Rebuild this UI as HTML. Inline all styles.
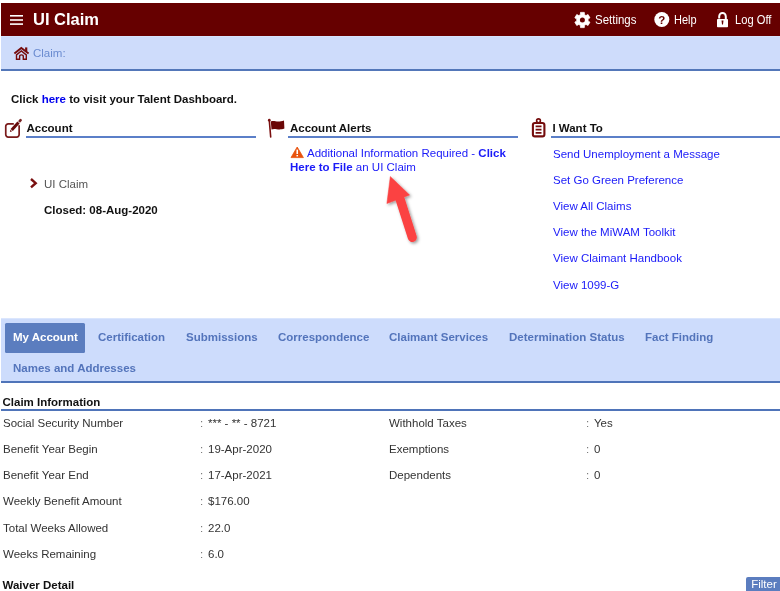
<!DOCTYPE html>
<html><head><meta charset="utf-8">
<style>
html,body{margin:0;padding:0;background:#fff;}
body{width:780px;height:591px;overflow:hidden;position:relative;font-family:"Liberation Sans",sans-serif;font-size:11.5px;color:#333;}
#hdr{position:absolute;left:1px;top:3px;width:779px;height:33px;background:#660000;}
#crumb{position:absolute;left:1px;top:36px;width:779px;height:33px;background:#cedcfb;border-top:1.5px solid #d6e3fc;box-sizing:content-box;}
#crumbline{position:absolute;left:1px;top:69px;width:779px;height:1.7px;background:#5377b9;}
.t{position:absolute;white-space:nowrap;line-height:14px;}
.b{font-weight:bold;}
.lnk{color:#1a1af8;}
.hline{position:absolute;height:2px;background:#5b7fc8;}
#tabs{position:absolute;left:1px;top:318px;width:779px;height:62px;background:#cddcfc;border-top:1px solid #dbe6fd;border-bottom:2px solid #4f74b9;}
.tab{position:absolute;font-weight:bold;color:#5374bb;font-size:11.5px;line-height:14px;white-space:nowrap;}
svg{position:absolute;left:0;top:0;overflow:visible;}
#wrap{position:absolute;left:0;top:0;width:780px;height:591px;will-change:transform;}
</style></head><body><div id="wrap">
<div id="hdr"></div>
<div id="crumb"></div><div id="crumbline"></div>

<!-- header icons -->
<svg width="780" height="591" viewBox="0 0 780 591">
  <!-- hamburger -->
  <g fill="#fff">
    <rect x="10" y="15" width="13" height="1.6"/>
    <rect x="10" y="19.2" width="13" height="1.6"/>
    <rect x="10" y="23.3" width="13" height="1.6"/>
  </g>
  <!-- gear -->
  <g transform="translate(582.4,20)">
    <path fill="#fff" fill-rule="evenodd" stroke="#fff" stroke-width="0.8" stroke-linejoin="round" d="M2.04,-5.32 L1.90,-7.62 L-1.90,-7.62 L-2.04,-5.32 L-3.59,-4.43 L-5.65,-5.45 L-7.55,-2.16 L-5.63,-0.89 L-5.63,0.89 L-7.55,2.16 L-5.65,5.45 L-3.59,4.43 L-2.04,5.32 L-1.90,7.62 L1.90,7.62 L2.04,5.32 L3.59,4.43 L5.65,5.45 L7.55,2.16 L5.63,0.89 L5.63,-0.89 L7.55,-2.16 L5.65,-5.45 L3.59,-4.43Z"/>
    <circle r="2.5" fill="#660000"/>
  </g>
  <!-- help -->
  <circle cx="661.8" cy="19.5" r="7.5" fill="#fff"/>
  <text x="661.8" y="23.8" text-anchor="middle" font-family="Liberation Sans, sans-serif" font-weight="bold" font-size="11.5" fill="#660000">?</text>
  <!-- lock -->
  <g>
    <path d="M719.2,18.5 V16.4 a3.3,3.5 0 0 1 6.6,0 V19.5" fill="none" stroke="#fff" stroke-width="2"/>
    <rect x="717" y="19" width="11" height="8.3" rx="0.8" fill="#fff"/>
    <path d="M721.5,20.6 h2 l-0.5,4 h-1 z" fill="#660000"/>
  </g>
  <!-- home -->
  <g fill="none" stroke="#760c0c" stroke-width="1.7" stroke-linejoin="miter">
    <path d="M14.4,53.6 L21.3,47.9 L28.6,53.6" stroke-width="1.9"/>
    <path d="M26.2,51.4 V47.4" stroke-width="2.2"/>
    <path d="M16.5,54.9 L21.3,51 L26.3,54.9 V59.3 H23.3 V56.6 a1.85,1.7 0 0 0 -3.7,0 V59.3 H16.5 Z" stroke-width="1.4"/>
  </g>
  <!-- edit icon -->
  <g fill="none" stroke="#7a1a1a">
    <path d="M19.15,125.3 V134.6 a2.45,2.45 0 0 1 -2.45,2.45 H8.2 a2.45,2.45 0 0 1 -2.45,-2.45 V126.3 a2.45,2.45 0 0 1 2.45,-2.45 H13.8" stroke-width="1.7"/>
    <path d="M11.7,130.1 L18.5,122.4" stroke-width="3" stroke="#680a0a"/>
    <path d="M19.7,121.1 L20.6,120.1" stroke-width="2.6" stroke="#680a0a" stroke-linecap="round" stroke-opacity="0.9"/>
    <path d="M12.2,131.3 L10.4,129.7 L9.9,132.1 Z" fill="#680a0a" stroke="none"/>
  </g>
  <!-- flag -->
  <g>
    <path d="M269.3,120.4 L270.7,137" stroke="#7a1010" stroke-width="1.6" fill="none" stroke-linecap="round"/><circle cx="269.3" cy="120.2" r="1.35" fill="#7a1010"/>
    <path d="M270.8,121.6 C274,120 277,123 284,120.6 L284.4,128.6 C278,131 275,127.6 271.5,129.6 Z" fill="#6a0606"/>
  </g>
  <!-- clipboard -->
  <g fill="none" stroke="#740c0c" transform="translate(-0.4,0)">
    <rect x="533.3" y="123" width="11.5" height="13.4" rx="2" stroke-width="2.1"/>
    <circle cx="538.9" cy="120.8" r="1.9" stroke-width="1.6"/>
    <path d="M536,126.4 H541.9 M536,129.6 H541.9 M536,132.8 H541.9" stroke-width="1.8"/>
  </g>
  <!-- chevron -->
  <path d="M31,179 L35.7,183.2 L31,187.4" fill="none" stroke="#7a1010" stroke-width="2.4"/>
  <!-- warning triangle -->
  <path d="M297.2,147 L303.4,157.6 H291 Z" fill="#e8520c" stroke="#e8520c" stroke-width="0.8" stroke-linejoin="round"/>
  <rect x="296.45" y="149.6" width="1.6" height="4.4" fill="#fff"/>
  <rect x="296.45" y="155" width="1.6" height="1.4" fill="#fff"/>
  <!-- red arrow -->
  <defs><filter id="sh" x="-30%" y="-30%" width="170%" height="170%"><feDropShadow dx="1.5" dy="1.5" stdDeviation="1.6" flood-color="#000" flood-opacity="0.4"/></filter></defs>
  <g filter="url(#sh)" fill="#fb4343" stroke="#fb4343">
    <path d="M400.2,199.5 L412.3,237.3" stroke-width="9.2" stroke-linecap="round" fill="none"/>
    <path d="M390.3,176.5 L386.9,203.5 L409.6,195 Z" stroke-width="0.5" stroke-linejoin="round"/>
  </g>
</svg>

<!-- header text -->
<div class="t b" style="left:33px;top:9px;font-size:16.5px;line-height:20px;color:#fff;">UI Claim</div>
<div class="t" style="left:595px;top:12.5px;font-size:12px;transform-origin:0 0;transform:scaleX(0.955);color:#fff;">Settings</div>
<div class="t" style="left:674px;top:12.5px;font-size:12px;transform-origin:0 0;transform:scaleX(0.915);color:#fff;">Help</div>
<div class="t" style="left:735px;top:12.5px;font-size:12px;transform-origin:0 0;transform:scaleX(0.93);color:#fff;">Log Off</div>
<div class="t" style="left:33px;top:46px;color:#6a8bd0;">Claim:</div>

<div class="t b" style="left:11px;top:92px;color:#111;">Click <span style="color:#0000ee">here</span> to visit your Talent Dashboard.</div>

<div class="t b" style="left:26.5px;top:121px;color:#111;">Account</div>
<div class="hline" style="left:25.5px;top:136px;width:230px;"></div>
<div class="t b" style="left:290px;top:121px;color:#111;">Account Alerts</div>
<div class="hline" style="left:288px;top:136px;width:230px;"></div>
<div class="t b" style="left:552.4px;top:121px;color:#111;">I Want To</div>
<div class="hline" style="left:551px;top:136px;width:229px;"></div>

<div class="t" style="left:44px;top:177px;color:#555;">UI Claim</div>
<div class="t b" style="left:44px;top:203px;color:#111;">Closed: 08-Aug-2020</div>

<div class="t lnk" style="left:307px;top:146px;">Additional Information Required - <b>Click</b></div>
<div class="t lnk" style="left:290px;top:160px;"><b>Here to File</b> an UI Claim</div>

<div class="t lnk" style="left:553px;top:147px;">Send Unemployment a Message</div>
<div class="t lnk" style="left:553px;top:173px;">Set Go Green Preference</div>
<div class="t lnk" style="left:553px;top:199px;">View All Claims</div>
<div class="t lnk" style="left:553px;top:225px;">View the MiWAM Toolkit</div>
<div class="t lnk" style="left:553px;top:251px;">View Claimant Handbook</div>
<div class="t lnk" style="left:553px;top:278px;">View 1099-G</div>

<div id="tabs"></div>
<div style="position:absolute;left:5px;top:322.6px;width:80.2px;height:30px;background:#5b7dbf;border-radius:1.5px;"></div>
<div class="tab" style="left:13px;top:330px;color:#fff;">My Account</div>
<div class="tab" style="left:98px;top:330px;">Certification</div>
<div class="tab" style="left:186px;top:330px;">Submissions</div>
<div class="tab" style="left:278px;top:330px;">Correspondence</div>
<div class="tab" style="left:389px;top:330px;">Claimant Services</div>
<div class="tab" style="left:509px;top:330px;">Determination Status</div>
<div class="tab" style="left:645px;top:330px;">Fact Finding</div>
<div class="tab" style="left:13px;top:361px;">Names and Addresses</div>

<div class="t b" style="left:2.5px;top:395px;color:#111;">Claim Information</div>
<div class="hline" style="left:1px;top:409.3px;width:779px;height:2px;background:#4f74b9;"></div>

<div class="t" style="left:3px;top:416px;">Social Security Number</div>
<div class="t" style="left:200px;top:416px;color:#777;">:</div><div class="t" style="left:208px;top:416px;">*** - ** - 8721</div>
<div class="t" style="left:3px;top:442px;">Benefit Year Begin</div>
<div class="t" style="left:200px;top:442px;color:#777;">:</div><div class="t" style="left:208px;top:442px;">19-Apr-2020</div>
<div class="t" style="left:3px;top:468px;">Benefit Year End</div>
<div class="t" style="left:200px;top:468px;color:#777;">:</div><div class="t" style="left:208px;top:468px;">17-Apr-2021</div>
<div class="t" style="left:3px;top:494px;">Weekly Benefit Amount</div>
<div class="t" style="left:200px;top:494px;color:#777;">:</div><div class="t" style="left:208px;top:494px;">$176.00</div>
<div class="t" style="left:3px;top:521px;">Total Weeks Allowed</div>
<div class="t" style="left:200px;top:521px;color:#777;">:</div><div class="t" style="left:208px;top:521px;">22.0</div>
<div class="t" style="left:3px;top:547px;">Weeks Remaining</div>
<div class="t" style="left:200px;top:547px;color:#777;">:</div><div class="t" style="left:208px;top:547px;">6.0</div>

<div class="t" style="left:389px;top:416px;">Withhold Taxes</div>
<div class="t" style="left:586px;top:416px;color:#777;">:</div><div class="t" style="left:594px;top:416px;">Yes</div>
<div class="t" style="left:389px;top:442px;">Exemptions</div>
<div class="t" style="left:586px;top:442px;color:#777;">:</div><div class="t" style="left:594px;top:442px;">0</div>
<div class="t" style="left:389px;top:468px;">Dependents</div>
<div class="t" style="left:586px;top:468px;color:#777;">:</div><div class="t" style="left:594px;top:468px;">0</div>

<div class="t b" style="left:2.5px;top:578px;color:#111;">Waiver Detail</div>
<div style="position:absolute;left:746px;top:577px;width:34px;height:16px;background:#5b7dbf;border-radius:2px 0 0 0;"></div>
<div class="t" style="left:751.2px;top:577px;color:#fff;">Filter</div>
</div></body></html>
